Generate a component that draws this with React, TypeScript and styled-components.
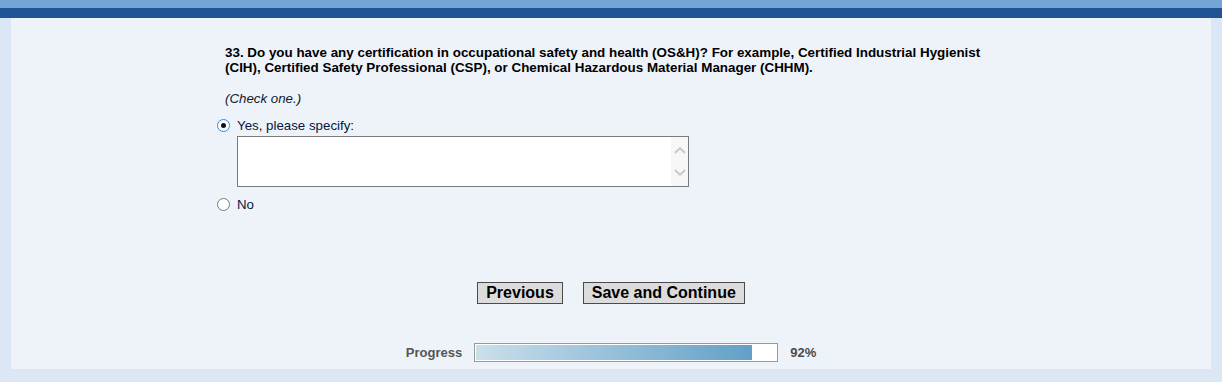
import React from "react";
import styled, { createGlobalStyle } from "styled-components";

const GlobalStyle = createGlobalStyle`
  html, body {
    margin: 0;
    padding: 0;
    background: #dbe7f4;
    font-family: "Liberation Sans", Arial, sans-serif;
  }
`;

const Page = styled.div`
  width: 1222px;
  min-height: 382px;
  background: #dbe7f4;
`;

const TopStripe = styled.div`
  height: 8px;
  background: #75a5d5;
`;

const NavBar = styled.div`
  height: 10px;
  background: #1f5597;
`;

const Main = styled.main`
  padding: 0 11px 13px;
`;

const Panel = styled.section`
  height: 351px;
  box-sizing: border-box;
  background: #eef3fa;
  padding-top: 27px;
  display: flex;
  flex-direction: column;
`;

const QuestionBlock = styled.div`
  padding-left: 214px;
  width: 770px;
  display: flex;
  flex-direction: column;
`;

const QuestionText = styled.p`
  margin: 0;
  font-size: 13.4px;
  line-height: 15px;
  font-weight: bold;
  color: #000;
`;

const Hint = styled.p`
  margin: 16px 0 0;
  font-size: 13.3px;
  line-height: 15px;
  font-style: italic;
  color: #101a30;
`;

const Options = styled.div`
  margin: 11px 0 0 -8px;
  display: flex;
  flex-direction: column;
`;

const OptionRow = styled.label<{ $gapTop?: number }>`
  display: flex;
  align-items: center;
  gap: 7px;
  height: 16px;
  margin-top: ${(p) => p.$gapTop ?? 0}px;
  font-size: 13.3px;
  color: #061640;
  cursor: pointer;
`;

const Radio = styled.input.attrs({ type: "radio" })`
  appearance: none;
  margin: 0;
  width: 13px;
  height: 13px;
  border-radius: 50%;
  border: 1px solid #7a7a7a;
  background: #fff;
  box-sizing: border-box;
  display: grid;
  place-items: center;
  &:checked {
    border-color: #3b8ad8;
  }
  &:checked::after {
    content: "";
    width: 5px;
    height: 5px;
    border-radius: 50%;
    background: #111;
  }
`;

const SpecifyBox = styled.div`
  margin: 3px 0 0 20px;
  width: 452px;
  height: 51px;
  box-sizing: border-box;
  border: 1px solid #7a7a7a;
  background: #fff;
  display: flex;
`;

const SpecifyInput = styled.textarea`
  flex: 1;
  border: none;
  outline: none;
  resize: none;
  background: transparent;
  font-family: "Liberation Sans", Arial, sans-serif;
  font-size: 13px;
  padding: 2px 4px;
`;

const ScrollTrack = styled.div`
  width: 17px;
  background: #f7f7f7;
  display: flex;
  flex-direction: column;
  justify-content: space-between;
  align-items: center;
  padding: 10px 0 10px;
`;

const ButtonRow = styled.div`
  margin-top: 70px;
  display: flex;
  justify-content: center;
  gap: 20px;
`;

const NavButton = styled.button`
  height: 22px;
  padding: 0 8px;
  border: 1px solid #4a4a4a;
  border-radius: 0;
  background: #dcdcdc;
  font-family: "Liberation Sans", Arial, sans-serif;
  font-size: 16px;
  font-weight: bold;
  line-height: 18px;
  color: #000;
  cursor: pointer;
`;

const ProgressRow = styled.div`
  margin-top: 39px;
  display: flex;
  justify-content: center;
  align-items: center;
  gap: 12px;
  font-size: 13px;
  font-weight: bold;
  color: #555;
`;

const ProgressTrack = styled.div`
  width: 304px;
  height: 19px;
  box-sizing: border-box;
  border: 1px solid #9a9a9a;
  background: #fff;
  padding: 1px;
`;

const ProgressFill = styled.div`
  height: 100%;
  background: linear-gradient(to right, #cadfeb, #62a0c8);
`;

const Percent = styled.span`
  color: #4a4a4a;
`;

const Chevron = ({ up }: { up?: boolean }) => (
  <svg width="12" height="7" viewBox="0 0 12 7">
    <path
      d={up ? "M1 6 L6 1.2 L11 6" : "M1 1 L6 5.8 L11 1"}
      fill="none"
      stroke="#c6c6c6"
      strokeWidth="1.8"
    />
  </svg>
);

export default function App() {
  const progress = 92;
  return (
    <Page>
      <GlobalStyle />
      <TopStripe />
      <NavBar />
      <Main>
        <Panel>
          <QuestionBlock>
            <QuestionText>
              33. Do you have any certification in occupational safety and health (OS&amp;H)? For
              example, Certified Industrial Hygienist (CIH), Certified Safety Professional (CSP), or
              Chemical Hazardous Material Manager (CHHM).
            </QuestionText>
            <Hint>(Check one.)</Hint>
            <Options>
              <OptionRow>
                <Radio name="q33" defaultChecked />
                Yes, please specify:
              </OptionRow>
              <SpecifyBox>
                <SpecifyInput aria-label="Please specify" />
                <ScrollTrack>
                  <Chevron up />
                  <Chevron />
                </ScrollTrack>
              </SpecifyBox>
              <OptionRow $gapTop={9}>
                <Radio name="q33" />
                No
              </OptionRow>
            </Options>
          </QuestionBlock>
          <ButtonRow>
            <NavButton>Previous</NavButton>
            <NavButton>Save and Continue</NavButton>
          </ButtonRow>
          <ProgressRow>
            <span>Progress</span>
            <ProgressTrack>
              <ProgressFill style={{ width: `${progress}%` }} />
            </ProgressTrack>
            <Percent>{progress}%</Percent>
          </ProgressRow>
        </Panel>
      </Main>
    </Page>
  );
}
